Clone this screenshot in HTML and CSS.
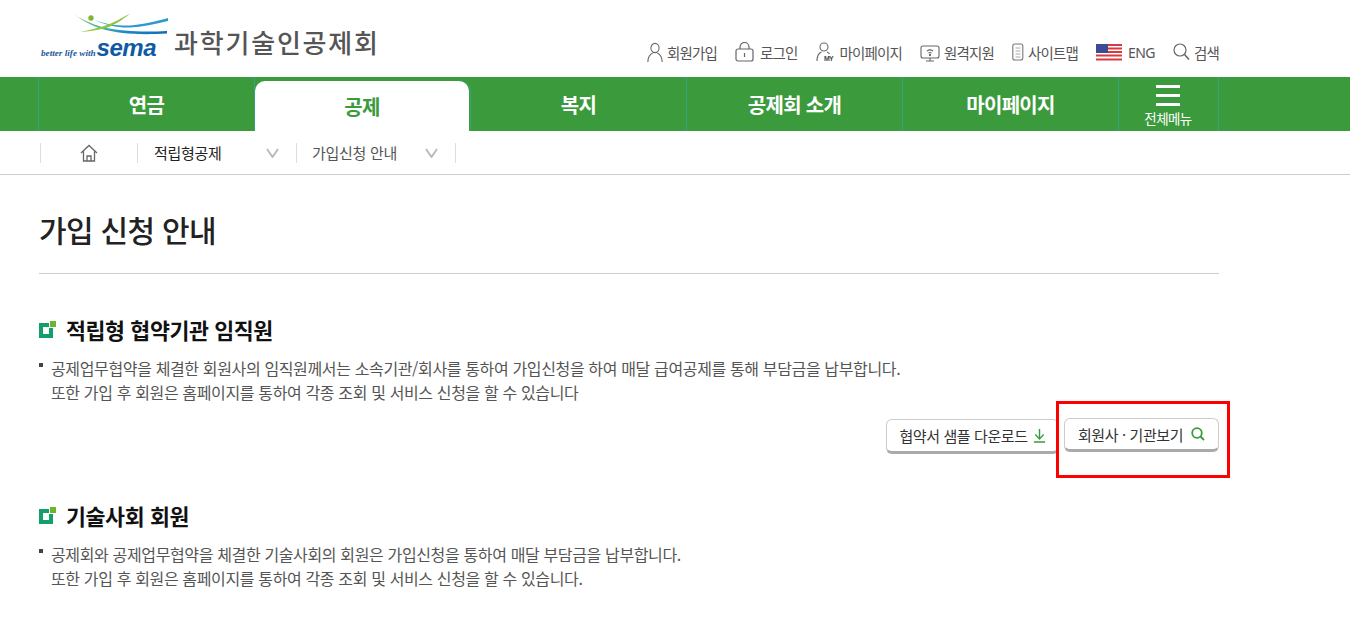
FILE: index.html
```html
<!DOCTYPE html>
<html lang="ko">
<head>
  <meta charset="UTF-8">
  <title>가입 신청 안내</title>
  <link rel="stylesheet" href="styles.css">
</head>
<body>
  <header class="top">
    <div class="wrap top-inner">
      <a class="logo">
        <div class="logo-mark">
          <svg width="130" height="26" viewBox="0 0 130 26">
            <defs>
              <linearGradient id="swoosh" x1="0" x2="1" y1="0" y2="0">
                <stop offset="0" stop-color="#8cc63f"/>
                <stop offset=".3" stop-color="#45b5a8"/>
                <stop offset=".6" stop-color="#1c84c6"/>
                <stop offset="1" stop-color="#0f6db5"/>
              </linearGradient>
            </defs>
            <path d="M31 0C40 7 52 12 62 15C85 20 105 20 127 19L127 21.500C100 23 80 22 62 17C50 13 40 7 31 0Z" fill="url(#swoosh)"/>
            <path d="M55 8C68 13 80 14 90 13.500C103 12.500 117 9 128 6L128 9C115 12 102 15 90 15.500C78 16 66 13 55 8Z" fill="#2b9ad4"/>
            <path d="M90 1.500C82 8 74 14 64 16.500C56 18.500 48 19.500 40 20C50 18 58 16 64 14C74 10.500 82 6 90 1.500Z" fill="#8cc63f"/>
            <circle cx="51" cy="6" r="2.700" fill="#7fb82e"/>
          </svg>
          <div class="logo-word"><em>better life with</em><b>sema</b></div>
        </div>
        <span class="logo-name">과학기술인공제회</span>
      </a>
      <ul class="util">
        <li>
          <svg width="16" height="20" viewBox="0 0 18 20" preserveAspectRatio="none" fill="none" stroke="#666" stroke-width="1.2"><circle cx="9" cy="6" r="4.6"/><path d="M1 20c0-5 3-8 5.500-9M17 20c0-5-3-8-5.500-9"/></svg>
          회원가입
        </li>
        <li class="wide">
          <svg width="19" height="20" viewBox="0 0 19 20" fill="none" stroke="#666" stroke-width="1.2"><rect x="1" y="7" width="17" height="12" rx="2"/><path d="M5 7V5a4.500 4.500 0 0 1 9 0v2M9.500 11v4"/></svg>
          로그인
        </li>
        <li>
          <svg width="20" height="20" viewBox="0 0 20 20" fill="none" stroke="#666" stroke-width="1.1"><circle cx="8" cy="5" r="4"/><path d="M1 19c0-5 2-8 4.500-9M11 10c1 .4 2 1 2.500 2"/><text x="8" y="19" class="my">MY</text></svg>
          마이페이지
        </li>
        <li>
          <svg width="20" height="20" viewBox="0 0 20 20" fill="none" stroke="#666" stroke-width="1.1"><rect x="1" y="4" width="18" height="12" rx="2"/><path d="M10 16v3M6 19h8M7 9c2-1.500 4-1.500 6 0M8.500 11c1-.7 2-.7 3 0"/><circle cx="10" cy="13" r=".6"/></svg>
          원격지원
        </li>
        <li>
          <svg width="12" height="18" viewBox="0 0 12 18" fill="none" stroke="#777" stroke-width="1.1"><rect x=".8" y="1" width="10" height="16" rx="2"/><path d="M3.500 5h5M3.500 8h5M3.500 11h5M3.500 14h5" stroke="#aaa"/></svg>
          사이트맵
        </li>
        <li class="lang">
          <svg width="26" height="17" viewBox="0 0 26 17">
            <rect width="26" height="17" fill="#fff"/>
            <path d="M0 1h26M0 4.500h26M0 8h26M0 11.500h26M0 15.500h26" stroke="#d83a3f" stroke-width="1.800"/>
            <rect width="12" height="9" fill="#3d4b94"/>
          </svg>
          <span>ENG</span>
        </li>
        <li>
          <svg width="17" height="18" viewBox="0 0 17 18" fill="none" stroke="#666" stroke-width="1.2"><circle cx="7" cy="7" r="6"/><path d="M11.500 11.500l4.500 5" stroke-width="1.600"/></svg>
          검색
        </li>
      </ul>
    </div>
  </header>

  <nav class="gnb">
    <ul class="wrap gnb-list">
      <li>연금</li>
      <li class="on">공제</li>
      <li>복지</li>
      <li>공제회 소개</li>
      <li>마이페이지</li>
      <li class="all-menu">
        <span class="bars"><i></i><i></i><i></i></span>
        <span class="all-label">전체메뉴</span>
      </li>
    </ul>
  </nav>

  <div class="crumbs">
    <div class="wrap crumb-row">
      <div class="crumb home">
        <svg width="18" height="18" viewBox="0 0 18 18" fill="none" stroke="#666" stroke-width="1.300"><path d="M1 9l8-7.500L17 9M3.500 7.500V17h11V7.500M7 17v-5h4v5"/></svg>
      </div>
      <div class="crumb first"><span>적립형공제</span><svg class="arrow" width="13" height="10" viewBox="0 0 13 10" fill="none" stroke="#bbb" stroke-width="2"><path d="M1 1l5.500 8L12 1"/></svg></div>
      <div class="crumb second"><span>가입신청 안내</span><svg class="arrow" width="13" height="10" viewBox="0 0 13 10" fill="none" stroke="#bbb" stroke-width="2"><path d="M1 1l5.500 8L12 1"/></svg></div>
    </div>
  </div>

  <main class="wrap content">
    <h1 class="page-title">가입 신청 안내</h1>

    <section class="block">
      <h2 class="block-title"><i class="mark"></i>적립형 협약기관 임직원</h2>
      <ul class="desc">
        <li>공제업무협약을 체결한 회원사의 임직원께서는 소속기관/회사를 통하여 가입신청을 하여 매달 급여공제를 통해 부담금을 납부합니다.<br>또한 가입 후 회원은 홈페이지를 통하여 각종 조회 및 서비스 신청을 할 수 있습니다</li>
      </ul>
      <div class="btns">
        <a class="btn down">협약서 샘플 다운로드
          <svg width="13" height="14" viewBox="0 0 14 14" preserveAspectRatio="none" fill="none" stroke="#3a9a3c" stroke-width="1.500"><path d="M7 0v9M2.500 5.500L7 10l4.500-4.500M1 13h12"/></svg>
        </a>
        <a class="btn view">회원사 · 기관보기
          <svg width="14" height="14" viewBox="0 0 14 14" fill="none" stroke="#3a9a3c" stroke-width="1.800"><circle cx="6" cy="6" r="4.800"/><path d="M9.500 9.500l3.500 3.500"/></svg>
        </a>
        <span class="red-box"></span>
      </div>
    </section>

    <section class="block second-block">
      <h2 class="block-title"><i class="mark"></i>기술사회 회원</h2>
      <ul class="desc">
        <li>공제회와 공제업무협약을 체결한 기술사회의 회원은 가입신청을 통하여 매달 부담금을 납부합니다.<br>또한 가입 후 회원은 홈페이지를 통하여 각종 조회 및 서비스 신청을 할 수 있습니다.</li>
      </ul>
    </section>
  </main>
</body>
</html>
```

FILE: styles.css
```css
* {
  box-sizing: border-box;
  margin: 0;
  padding: 0;
}

html, body {
  height: 632px;
  overflow: hidden;
}

body {
  background: #fff;
  color: #333;
  font-family: 'Noto Sans CJK KR', 'Noto Sans', sans-serif;
  font-size: 14px;
}

ul {
  list-style: none;
}

.wrap {
  width: 1180px;
  margin-left: 39px;
}

/* top */
.top {
  height: 77px;
}

.top-inner {
  display: flex;
  justify-content: space-between;
  height: 77px;
}

.logo {
  display: flex;
  align-items: flex-start;
  margin-left: 2px;
}

.logo-mark {
  width: 130px;
  padding-top: 12px;
}

.logo-mark svg {
  display: block;
  margin-left: -1px;
}

.logo-word {
  display: flex;
  align-items: baseline;
  height: 24px;
  white-space: nowrap;
}

.logo-word em {
  font-family: 'Liberation Serif', serif;
  font-size: 9.200px;
  font-weight: bold;
  color: #17589c;
}

.logo-word b {
  font-family: 'Liberation Sans', sans-serif;
  font-size: 24px;
  font-style: italic;
  font-weight: bold;
  color: #0f5aa5;
  margin-left: 1px;
  letter-spacing: -.5px;
  line-height: 20px;
}

.logo-name {
  margin: 23px 0 0 3px;
  font-size: 26px;
  line-height: 38px;
  font-weight: 500;
  color: #555;
  letter-spacing: 1.800px;
  white-space: nowrap;
}

.util {
  display: flex;
  gap: 18px;
  padding-top: 41px;
  height: 70px;
}

.util li {
  display: flex;
  align-items: center;
  gap: 4px;
  height: 22px;
  font-size: 14.500px;
  color: #555;
  letter-spacing: -.85px;
  white-space: nowrap;
}

.util .wide {
  gap: 6px;
}

.util .lang {
  gap: 6px;
}

.util .lang span {
  font-family: 'Noto Sans', sans-serif;
  font-size: 14px;
  letter-spacing: -.5px;
}

.my {
  font: bold 7px 'Liberation Sans', sans-serif;
  fill: #444;
  stroke: none;
}

/* main nav */
.gnb {
  height: 54px;
  background: #3a9a3c;
}

.gnb-list {
  display: flex;
  height: 54px;
  margin-left: 38px;
  width: 1181px;
  border-left: 1px solid #37a37e;
}

.gnb-list li {
  flex: 0 0 216px;
  display: flex;
  align-items: center;
  justify-content: center;
  border-right: 1px solid #37a37e;
  font-size: 20px;
  font-weight: 700;
  letter-spacing: -.7px;
  color: #fff;
  padding-top: 1px;
  white-space: nowrap;
}

.gnb-list li.on {
  flex: 0 0 214px;
  margin: 4px 2px 0 0;
  border-right: 0;
  border-radius: 10px 10px 0 0;
  background: #fff;
  color: #3a9a3c;
  padding-top: 0;
  box-shadow: 1px 0 0 #3a9a3c, 2px 0 0 #37a37e;
}

.gnb-list .all-menu {
  flex: 0 0 100px;
  flex-direction: column;
  padding: 2px 1px 0 0;
}

.bars {
  display: flex;
  flex-direction: column;
  gap: 6px;
  width: 24px;
}

.bars i {
  display: block;
  height: 3px;
  background: #fff;
}

.all-label {
  margin-top: 4px;
  font-size: 13.500px;
  font-weight: 400;
  line-height: 16px;
  letter-spacing: -.6px;
}

/* breadcrumb */
.crumbs {
  height: 44px;
  border-bottom: 1px solid #ccc;
}

.crumb-row {
  display: flex;
  align-items: center;
  height: 43px;
  margin-left: 40px;
}

.crumb {
  display: flex;
  align-items: center;
  height: 20px;
  border-left: 1px solid #ddd;
  font-size: 15px;
  letter-spacing: -.3px;
  white-space: nowrap;
}

.crumb.home {
  width: 97px;
  justify-content: center;
}

.crumb.first {
  width: 159px;
  justify-content: space-between;
  padding: 0 17px 0 16px;
  color: #222;
}

.crumb.second {
  width: 160px;
  justify-content: space-between;
  padding: 0 17px 0 15px;
  border-right: 1px solid #ddd;
  color: #555;
}

/* content */
.content {
  padding-top: 32px;
}

.page-title {
  height: 67px;
  border-bottom: 1px solid #ccc;
  font-size: 30px;
  line-height: 44px;
  font-weight: 500;
  color: #222;
  letter-spacing: -.7px;
}

.block {
  padding-top: 39px;
}

.second-block {
  padding-top: 41px;
}

.block-title {
  display: flex;
  align-items: center;
  gap: 10px;
  height: 32px;
  font-size: 21.700px;
  font-weight: 700;
  letter-spacing: -.4px;
  color: #111;
}

/* green square with a lime corner */
.mark {
  position: relative;
  width: 14px;
  height: 15px;
  margin: 2px 3px 0 0;
  background: #12a06a;
}

.mark::before {
  content: '';
  position: absolute;
  left: 4px;
  top: 4px;
  width: 6px;
  height: 7px;
  background: #fff;
}

.mark::after {
  content: '';
  position: absolute;
  left: 11px;
  top: -2px;
  width: 6px;
  height: 6px;
  background: #6cb52d;
  box-shadow: -1px 1px 0 #fff;
}

.desc {
  margin-top: 11px;
  padding-left: 12px;
}

.desc li {
  position: relative;
  font-size: 16px;
  line-height: 24px;
  color: #555;
  letter-spacing: -.36px;
  white-space: nowrap;
}

.desc li::before {
  content: '';
  position: absolute;
  left: -12px;
  top: 7px;
  width: 4px;
  height: 4px;
  background: #444;
}

.btns {
  position: relative;
  display: flex;
  justify-content: flex-end;
  align-items: flex-start;
  gap: 5px;
  margin-top: 14px;
  height: 40px;
}

.btn {
  display: flex;
  align-items: center;
  justify-content: center;
  gap: 5px;
  height: 34px;
  padding: 0;
  border: 1px solid #ccc;
  border-bottom: 3px solid #aaa;
  border-radius: 6px;
  background: #fff;
  font-size: 15px;
  letter-spacing: -.4px;
  color: #333;
  white-space: nowrap;
}

.btn svg {
  flex: none;
}

.btn.down {
  height: 35px;
  margin-top: 1px;
  width: 173px;
}

.btn.view {
  gap: 8px;
  width: 155px;
}

.red-box {
  position: absolute;
  left: 1017px;
  top: -17px;
  width: 174px;
  height: 77px;
  border: 3px solid #f00;
}
```
